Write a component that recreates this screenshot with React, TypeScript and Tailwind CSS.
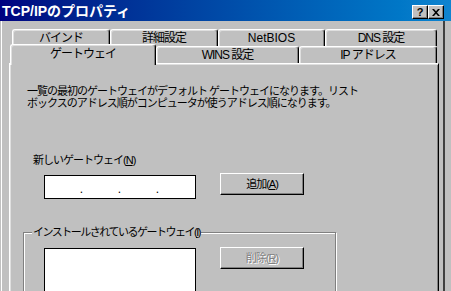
const Tab = ({ label, className, selected }: { label: string; className: string; selected?: boolean }) => (
  <div
    className={`flex items-center justify-center bg-[#c0c0c0] border-l border-t border-white border-r border-r-black rounded-t-[3px] shadow-[inset_-1px_0_#808080,inset_1px_1px_#dfdfdf] text-[12px] leading-[12px] tracking-[-1px] text-black ${
      selected ? "relative z-10 -mt-[2px] -mb-[2px] h-[21px] pb-[2px]" : "h-[17px]"
    } ${className}`}
  >
    {label}
  </div>
);

const Button = ({ children, disabled }: { children: React.ReactNode; disabled?: boolean }) => (
  <div
    className={`flex h-[22px] w-[84px] items-center justify-center border border-t-white border-l-white border-b-black border-r-black shadow-[inset_-1px_-1px_#808080] text-[11px] leading-[12px] tracking-[-1px] ${
      disabled ? "text-[#808080] [text-shadow:1px_1px_#ffffff]" : "text-black"
    }`}
  >
    {children}
  </div>
);

const App = () => {
  return (
    <div className="w-[451px] h-[291px] overflow-hidden bg-[#c0c0c0] font-['Liberation_Sans','Noto_Sans_CJK_JP',sans-serif] text-black">
      {/* title bar */}
      <div className="flex h-[21px] items-center bg-linear-to-r from-[#000080] to-[#1084d0] pl-[2px] pr-[7px]">
        <span className="text-[14px] leading-[16px] font-bold text-white">TCP/IPのプロパティ</span>
        <div className="ml-auto flex self-end mb-[2px]">
          <div className="flex h-[14px] w-[16px] items-center justify-center bg-[#c0c0c0] border border-t-white border-l-white border-b-black border-r-black shadow-[inset_-1px_-1px_#808080] text-[11px] leading-none font-bold text-black">
            ?
          </div>
          <div className="flex h-[14px] w-[16px] items-center justify-center bg-[#c0c0c0] border border-t-white border-l-white border-b-black border-r-black shadow-[inset_-1px_-1px_#808080]">
            <svg width="8" height="7" viewBox="0 0 8 7">
              <path d="M0 0h2l2 2.2L6 0h2L5 3.5 8 7H6L4 4.8 2 7H0l3-3.5z" fill="#000" />
            </svg>
          </div>
        </div>
      </div>

      {/* dialog body */}
      <div className="ml-[1px] w-[444px] h-[270px] border-l border-white border-r-2 border-r-[#404040] pl-[7px] pt-[8px]">
        <div className="flex ml-[3px] h-[17px]">
          <Tab label="バインド" className="w-[98px]" />
          <Tab label="詳細設定" className="w-[108px]" />
          <Tab label="NetBIOS" className="w-[107px] tracking-normal" />
          <Tab label="DNS 設定" className="w-[112px]" />
        </div>
        <div className="flex items-start ml-[1px] h-[17px]">
          <Tab label="ゲートウェイ" className="w-[146px]" selected />
          <Tab label="WINS 設定" className="w-[143px]" />
          <Tab label="IP アドレス" className="w-[138px]" />
        </div>

        <div className="w-[430px] h-[240px] border-l border-t border-white border-r border-r-black shadow-[inset_1px_1px_#dfdfdf,inset_-1px_0_#808080] text-[11px] leading-[12px] tracking-[-1px]">
          <div className="ml-[17px] pt-[21px]">
            <div>一覧の最初のゲートウェイがデフォルト ゲートウェイになります。リスト</div>
            <div>ボックスのアドレス順がコンピュータが使うアドレス順になります。</div>
          </div>

          <div className="ml-[23px] mt-[45px]">
            新しいゲートウェイ(<u>N</u>)
          </div>

          <div className="flex items-start ml-[34px] mt-[7px]">
            <div className="mt-[2px] flex h-[24px] w-[152px] items-end bg-white border border-black pb-[2px] text-[12px] leading-[14px]">
              <span className="w-[37px] text-right">.</span>
              <span className="w-[38px] text-right">.</span>
              <span className="w-[38px] text-right">.</span>
            </div>
            <div className="ml-[24px]">
              <Button>
                追加(<u>A</u>)
              </Button>
            </div>
          </div>

          <div className="relative mt-[33px] ml-[13px] w-[313px] h-[80px] border border-[#808080] shadow-[inset_1px_1px_#ffffff,1px_1px_#ffffff]">
            <div className="absolute -top-[7px] left-[8px] px-[1px] bg-[#c0c0c0] tracking-[-1.5px]">
              インストールされているゲートウェイ(<u>I</u>)
            </div>
            <div className="flex items-start pt-[14px] pl-[20px]">
              <div className="mt-[1px] h-[60px] w-[152px] bg-white border border-black" />
              <div className="ml-[24px]">
                <Button disabled>
                  削除(<u>R</u>)
                </Button>
              </div>
            </div>
          </div>
        </div>
      </div>
    </div>
  );
};

export default App;
